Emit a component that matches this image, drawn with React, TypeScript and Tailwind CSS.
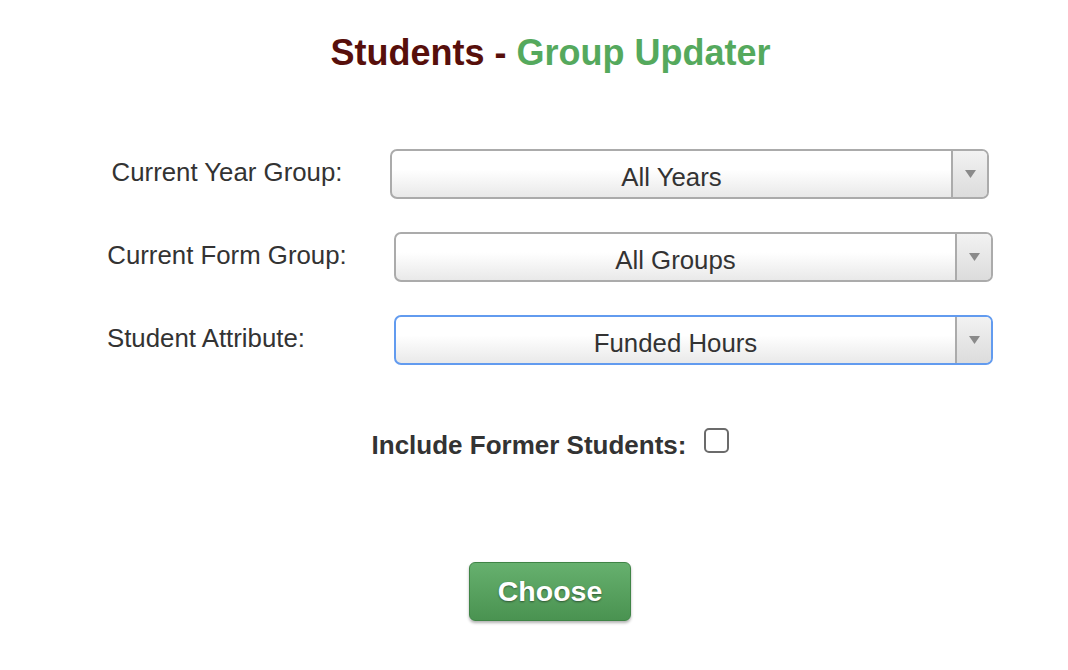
import React from "react";

function Arrow() {
  return (
    <svg width="11" height="8" viewBox="0 0 11 8" className="block">
      <path d="M0 0 L11 0 L5.5 8 Z" fill="#8a8a8a" />
    </svg>
  );
}

function SelectBox({ value, focused }: { value: string; focused?: boolean }) {
  return (
    <div
      className={
        "flex h-[50px] w-[599px] overflow-hidden rounded-[7px] border-2 bg-gradient-to-b from-white from-40% to-[#e9e9e9] " +
        (focused ? "border-[#629bef]" : "border-[#ababab]")
      }
    >
      <div className="flex flex-1 items-center justify-center pt-[7px] text-[25.8px] text-[#333]">
        {value}
      </div>
      <div className="flex w-[36px] items-center justify-center border-l-2 border-[#ababab] bg-gradient-to-b from-[#f2f2f2] to-[#dcdcdc]">
        <Arrow />
      </div>
    </div>
  );
}

export default function App() {
  return (
    <div
      className="min-h-[670px] w-full bg-white text-[#333]"
      style={{ fontFamily: '"Liberation Sans", Arial, Helvetica, sans-serif' }}
    >
      <div className="pl-[33px] pt-[35px] text-center text-[36px] font-bold leading-[36px]">
        <span className="text-[#570f0b]">Students - </span>
        <span className="text-[#55a95d]">Group Updater</span>
      </div>

      <div className="mt-[78px] flex flex-col gap-[33px] pl-[107px]">
        <div className="flex items-center">
          <div className="w-[240px] pb-[3px] text-center text-[25.8px]">Current Year Group:</div>
          <div className="ml-[43px]">
            <SelectBox value="All Years" />
          </div>
        </div>
        <div className="flex items-center">
          <div className="w-[240px] pb-[3px] text-center text-[25.8px]">Current Form Group:</div>
          <div className="ml-[47px]">
            <SelectBox value="All Groups" />
          </div>
        </div>
        <div className="flex items-center">
          <div className="w-[240px] pb-[3px] text-left text-[25.8px]">Student Attribute:</div>
          <div className="ml-[47px]">
            <SelectBox value="Funded Hours" focused />
          </div>
        </div>
      </div>

      <div className="mt-[61px] flex items-center justify-center pl-[33px]">
        <span className="text-[26px] font-bold text-[#333]">Include Former Students:</span>
        <span className="ml-[18px] mb-[10px] inline-block h-[25px] w-[25px] rounded-[5px] border-2 border-[#6b6b6b] bg-white" />
      </div>

      <div className="mt-[97px] flex justify-center pl-[32px]">
        <button className="h-[59px] w-[162px] rounded-[6px] border border-[#3f8446] bg-gradient-to-b from-[#66b06e] to-[#4a9351] text-[28.5px] font-bold text-white shadow-[0_2px_3px_rgba(0,0,0,0.3)] [text-shadow:0_1px_2px_rgba(0,0,0,0.45)]">
          Choose
        </button>
      </div>
    </div>
  );
}
